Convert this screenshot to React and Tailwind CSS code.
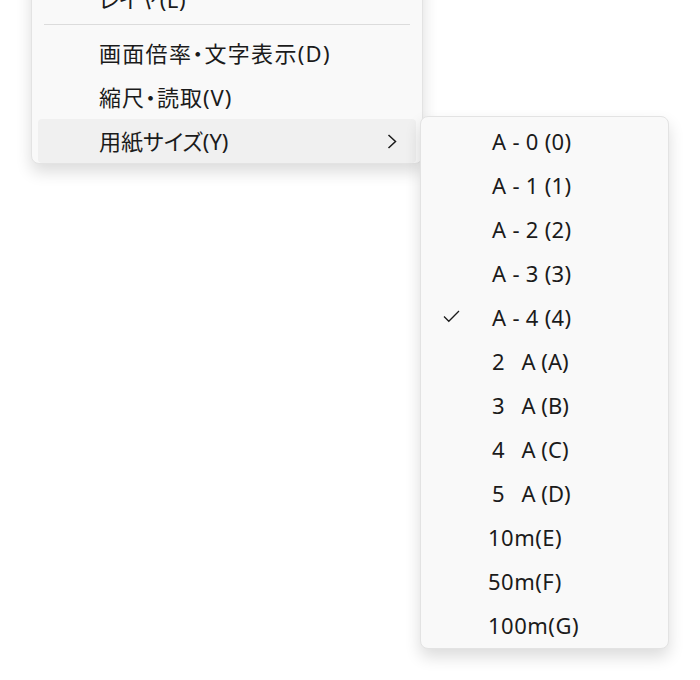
import React from "react";

const font = { fontFamily: '"Noto Sans", "Noto Sans CJK JP", sans-serif' };

const mainItems = [
  { label: "レイヤ(L)", track: "tracking-[0.6px]" },
  { separator: true },
  { label: "画面倍率・文字表示(D)", track: "tracking-[1.3px]" },
  { label: "縮尺・読取(V)", track: "tracking-[1px]" },
  { label: "用紙サイズ(Y)", track: "tracking-[0px]", submenu: true, active: true },
];

const paperSizes = [
  { label: "A - 0 (0)" },
  { label: "A - 1 (1)" },
  { label: "A - 2 (2)" },
  { label: "A - 3 (3)" },
  { label: "A - 4 (4)", checked: true },
  { num: "2", label: "A (A)" },
  { num: "3", label: "A (B)" },
  { num: "4", label: "A (C)" },
  { num: "5", label: "A (D)" },
  { label: "10m(E)", metric: true },
  { label: "50m(F)", metric: true },
  { label: "100m(G)", metric: true },
];

function Chevron() {
  return (
    <svg width="10" height="15" viewBox="0 0 10 15" className="text-[#1b1b1b]">
      <path d="M1.5 1 L8.5 7.5 L1.5 14" fill="none" stroke="currentColor" strokeWidth="1.5" />
    </svg>
  );
}

function Check() {
  return (
    <svg width="17" height="13" viewBox="0 0 17 13" className="text-[#1b1b1b]">
      <path d="M1 6.5 L5.8 11.3 L16 1" fill="none" stroke="currentColor" strokeWidth="1.3" />
    </svg>
  );
}

function SubMenu() {
  return (
    <div className="absolute left-[382px] top-[-3px] z-10 w-[249px] rounded-[8px] border border-[#e3e3e3] bg-[#f9f9f9] px-[6px] pb-[1px] pt-[2px] shadow-[0_8px_16px_rgba(0,0,0,0.14)]">
      {paperSizes.map((item) => (
        <div key={item.label + (item.num || "")} className="relative flex h-[44px] items-center text-[22px] leading-none text-[#1b1b1b]">
          {item.checked ? (
            <span className="absolute left-[16px] top-[15px] flex">
              <Check />
            </span>
          ) : null}
          {item.num ? (
            <span className="flex pl-[65px]">
              <span>{item.num}</span>
              <span className="ml-[17px]">{item.label}</span>
            </span>
          ) : (
            <span className={item.metric ? "pl-[61px] tracking-[0.5px]" : "pl-[65px] tracking-[0.3px]"}>{item.label}</span>
          )}
        </div>
      ))}
    </div>
  );
}

export default function App() {
  return (
    <div className="min-h-[680px] w-[700px] overflow-hidden bg-white" style={font}>
      <div className="relative ml-[31px] -mt-[27px] w-[392px] rounded-[8px] border border-[#e3e3e3] bg-[#f9f9f9] px-[6px] pt-[3px] shadow-[0_8px_16px_rgba(0,0,0,0.14)]">
        {mainItems.map((item, i) =>
          item.separator ? (
            <div key={i} className="flex h-[10px] items-start px-[6px] pt-[3px]">
              <div className="h-px w-full bg-[#dcdcdc]" />
            </div>
          ) : (
            <div
              key={i}
              className={
                item.active
                  ? "relative flex h-[44px] items-center justify-between rounded-[4px] bg-[#f0f0f0] pl-[61px] pr-[19px] text-[22px] leading-none text-[#1b1b1b]"
                  : "relative flex h-[44px] items-center justify-between pl-[61px] pr-[19px] text-[22px] leading-none text-[#1b1b1b]"
              }
            >
              <span className={"[font-feature-settings:'palt'] " + item.track}>{item.label}</span>
              {item.submenu ? <Chevron /> : null}
              {item.submenu ? <SubMenu /> : null}
            </div>
          )
        )}
      </div>
    </div>
  );
}
